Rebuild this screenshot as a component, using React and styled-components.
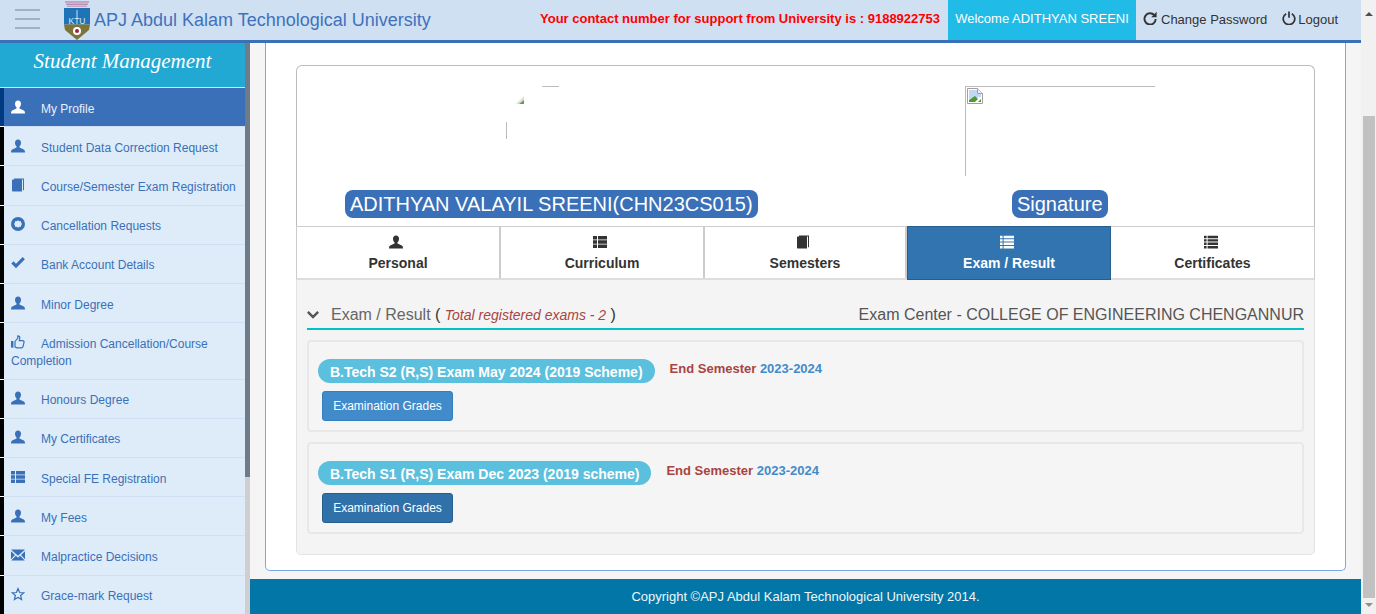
import React from 'react';
import styled, { createGlobalStyle } from 'styled-components';

const GlobalStyle = createGlobalStyle`
  html, body {
    margin: 0;
    height: 100%;
    overflow: hidden;
    background: #f5f5f5;
    font-family: "Liberation Sans", Arial, sans-serif;
    font-size: 14px;
    color: #333;
  }
  * { box-sizing: border-box; }
`;

const ICONS = {
  user: <path d="M7 .4C5 .4 4 1.9 4 3.7c0 1.5.7 3 1.5 3.6v1.3L1.2 10.400C.4 10.800 0 11.800 0 13.400h14c0-1.600-.4-2.600-1.200-3L8.500 8.600V7.300c.8-.6 1.500-2.100 1.500-3.600C10 1.900 9 .4 7 .4z" />,
  book: <path fillRule="evenodd" d="M3 .4h10v11.800h-1V1.400H3zM1 2.400c0-.6.4-1 1-1h9v12.200H2c-.6 0-1-.4-1-1z" />,
  ring: <path fillRule="evenodd" d="M7 0a7 7 0 1 0 0 14A7 7 0 0 0 7 0zm0 3.200l1.200 1 1.500-.1.300 1.500 1 1.400-1 1.400-.3 1.500-1.500-.1L7 10.800l-1.200-1-1.500.1-.3-1.500-1-1.400 1-1.400.3-1.500 1.500.1z" />,
  check: <path d="M.3 7.500l2.200-2.200 2.500 2.500L11.700 1l2.200 2.200L5 12.200z" />,
  thumb: (
    <g>
      <rect x="0" y="6" width="2.400" height="6.600" />
      <path fill="none" stroke="currentColor" strokeWidth="1.200" d="M4 6.500L6.800 3V.8c1.400 0 2 1 2 2.200L8.300 5.600h3.400c1 0 1.500.8 1.300 1.700l-1 4.300c-.2.800-.7 1.200-1.500 1.200H6c-.9 0-1.300-.5-2-.8z" />
    </g>
  ),
  thList: <path d="M0 1h4v3.400H0zM5 1h9v3.400H5zM0 5.300h4v3.400H0zM5 5.300h9v3.400H5zM0 9.600h4V13H0zM5 9.600h9V13H5z" />,
  list: <path d="M0 .8h2.600v2.400H0zM3.600.8H14v2.400H3.600zM0 4.200h2.600v2.400H0zM3.600 4.200H14v2.400H3.600zM0 7.600h2.600V10H0zM3.600 7.600H14V10H3.600zM0 11h2.600v2.400H0zM3.600 11H14v2.400H3.600z" />,
  mail: <path d="M0 1.500h14L7 7.800zM0 3.300l4 3.700-4 4.200zM14 3.300L10 7l4 4.200zM4.900 7.800L7 9.700l2.100-1.900 4.700 4.700H.2z" />,
  star: <path fill="none" stroke="currentColor" strokeWidth="1.200" d="M7 1.600l1.600 3.900 4.200.3-3.200 2.700 1 4.100L7 10.400l-3.600 2.200 1-4.100-3.200-2.700 4.200-.3z" />,
  chevron: <path d="M2 2.300L7 7.300l5-5 2 2-7 7-7-7z" />,
  repeat: (
    <g>
      <path fill="none" stroke="currentColor" strokeWidth="1.900" d="M11.300 4.200A5.600 5.600 0 1 0 12.700 8" />
      <path d="M13.600 .8v5.400H8.200z" />
    </g>
  ),
  power: (
    <g fill="none" stroke="currentColor" strokeWidth="1.700">
      <path d="M4.200 2.700a5.800 5.800 0 1 0 5.600 0" />
      <path d="M7 .5v6.300" />
    </g>
  ),
};

const Icon = ({ name, size = 14 }) => (
  <svg width={size} height={size} viewBox="0 0 14 14" fill="currentColor">{ICONS[name]}</svg>
);

const Page = styled.div`
  display: flex;
  width: 1376px;
  height: 614px;
  overflow: hidden;
`;

const Viewport = styled.div`
  display: flex;
  flex-direction: column;
  width: 1361px;
  height: 614px;
`;

const PageScrollbar = styled.div`
  display: flex;
  flex-direction: column;
  width: 15px;
  height: 614px;
  background: #f1f1f1;
`;

const ScrollArrow = styled.div`
  display: flex;
  justify-content: center;
  height: 16px;
  padding-top: ${({ $down }) => ($down ? '5px' : '6px')};
  &::before {
    content: '';
    border-left: 4px solid transparent;
    border-right: 4px solid transparent;
    ${({ $down }) => ($down ? 'border-top: 4px solid #8f8f8f;' : 'border-bottom: 4px solid #505050;')}
  }
`;

const ScrollGap = styled.div`
  height: 100px;
`;

const ScrollThumb = styled.div`
  flex: 1;
  margin: 0 1px 0 2px;
  background: #c1c1c1;
`;

const Header = styled.header`
  display: flex;
  align-items: stretch;
  height: 43px;
  flex: none;
  background: #cfe0f3;
  border-bottom: 3px solid #3a70b8;
`;

const Burger = styled.div`
  display: flex;
  flex-direction: column;
  gap: 7px;
  width: 25px;
  margin: 9px 0 0 15px;
  span {
    height: 2px;
    background: #9fb1c2;
  }
`;

const Logo = styled.svg`
  margin-left: 24px;
  flex: none;
  overflow: visible;
`;

const Title = styled.div`
  margin-left: 4px;
  font-size: 18px;
  line-height: 40px;
  color: #3f72bb;
  white-space: nowrap;
`;

const Support = styled.div`
  margin-left: auto;
  font-size: 13px;
  font-weight: bold;
  line-height: 38px;
  color: #f00;
  white-space: nowrap;
`;

const Welcome = styled.div`
  margin-left: 8px;
  width: 188px;
  text-align: center;
  font-size: 13px;
  line-height: 38px;
  color: #fff;
  background: #20bbe6;
  white-space: nowrap;
`;

const HeadLink = styled.a`
  display: flex;
  align-items: center;
  gap: ${({ $iconGap }) => $iconGap}px;
  margin-left: ${({ $gap }) => $gap}px;
  padding-bottom: 2px;
  font-size: 13px;
  color: #333;
  white-space: nowrap;
  svg { margin-top: -2px; }
`;

const HeaderEnd = styled.div`
  width: 23px;
  flex: none;
`;

const Body = styled.div`
  display: flex;
  flex: 1;
  min-height: 0;
`;

const Sidebar = styled.aside`
  display: flex;
  flex-direction: column;
  width: 245px;
  flex: none;
  overflow: hidden;
  background: #deecf9;
`;

const SideTitle = styled.div`
  height: 45px;
  flex: none;
  padding-top: 5px;
  text-align: center;
  font-family: "Liberation Serif", serif;
  font-style: italic;
  font-size: 21px;
  line-height: 26px;
  color: #fff;
  background: #21a9d4;
  border-bottom: 1px solid #cfe6f5;
`;

const SideItem = styled.a`
  position: relative;
  display: block;
  flex: none;
  padding: 12.500px 6px 8.500px 11px;
  font-size: 12px;
  line-height: 17.200px;
  color: ${({ $active }) => ($active ? '#e8f0fa' : '#3a70b8')};
  background: ${({ $active }) => ($active ? '#3a70b8' : '#deecf9')};
  box-shadow: inset 4px 0 0 ${({ $active }) => ($active ? '#003a80' : '#000')};
  border-bottom: 1px solid #cfe0f3;
  &::after {
    content: '';
    position: absolute;
    left: 0;
    bottom: -1px;
    width: 4px;
    height: 1px;
    background: #fff;
  }
`;

const SideIcon = styled.span`
  display: inline-block;
  width: 30px;
  height: 17px;
  vertical-align: top;
  color: ${({ $active }) => ($active ? '#fff' : '#3a70b8')};
  svg { display: block; margin-top: -1px; }
`;

const SideScrollbar = styled.div`
  display: flex;
  flex-direction: column;
  width: 5px;
  flex: none;
  background: #cfcfcf;
  &::before {
    content: '';
    height: 434px;
    background: #6f7b88;
  }
`;

const Content = styled.main`
  display: flex;
  flex-direction: column;
  flex: 1;
  min-width: 0;
  background: #f5f5f5;
`;

const Panel = styled.section`
  flex: 1;
  margin: 0 15px 8px;
  padding: 22px 30px 0;
  background: #fff;
  border: 1px solid #7aa8e0;
  border-top: none;
  border-radius: 0 0 5px 5px;
`;

const Card = styled.div`
  display: flex;
  flex-direction: column;
  height: 490px;
`;

const Identity = styled.div`
  display: flex;
  height: 161px;
  flex: none;
  border: 1px solid #bbb;
  border-bottom: none;
  border-radius: 6px 6px 0 0;
`;

const IdentityCol = styled.div`
  display: flex;
  flex: 1;
  flex-direction: column;
  align-items: center;
  padding-top: 20px;
`;

const ImageSlot = styled.div`
  width: ${({ $w }) => $w}px;
  height: 90px;
  margin-bottom: 14px;
`;

const SignatureImage = styled(ImageSlot)`
  padding: 1px;
  border-top: 1px solid #bbb;
  border-left: 1px solid #bbb;
`;

const NamePill = styled.div`
  height: 28px;
  padding: 0 5px;
  font-size: 20px;
  line-height: 28px;
  color: #fff;
  background: #3a70b8;
  border-radius: 8px;
  white-space: nowrap;
`;

const Tabs = styled.nav`
  display: grid;
  grid-template-columns: 204px 204px 202px 204px 1fr;
  height: 54px;
  flex: none;
  background: #fff;
  border: 1px solid #ccc;
  border-bottom: 2px solid #ddd;
`;

const Tab = styled.a`
  display: flex;
  flex-direction: column;
  align-items: center;
  padding-top: 8px;
  font-size: 14px;
  font-weight: bold;
  line-height: 20px;
  color: ${({ $active }) => ($active ? '#fff' : '#333')};
  background: ${({ $active }) => ($active ? '#3274b0' : 'transparent')};
  border-right: ${({ $plain }) => ($plain ? 'none' : '2px solid #ccc')};
  ${({ $active }) => $active && 'margin: -1px 0 -2px; border: 1px solid #285e8e;'}
  svg { margin: 0 4px 4px 0; flex: none; }
`;

const Section = styled.div`
  flex: 1;
  padding: 0 10px;
  background: #f4f4f4;
  border: 1px solid #e3e3e3;
  border-top: none;
  border-radius: 0 0 5px 5px;
`;

const SectionHead = styled.div`
  display: flex;
  justify-content: space-between;
  align-items: center;
  height: 50px;
  padding-top: 21px;
  font-size: 16px;
  line-height: 30px;
  color: #666;
  border-bottom: 2px solid #00c0c8;
  white-space: nowrap;
`;

const HeadTitle = styled.div`
  display: flex;
  align-items: center;
  gap: 12px;
  svg { color: #555; }
  em {
    font-size: 14px;
    color: #a94442;
  }
  b {
    font-weight: normal;
    color: #333;
  }
`;

const CenterName = styled.div`
  color: #555;
`;

const ExamCard = styled.div`
  height: 92px;
  margin-top: 10px;
  padding: 17px 9px 0;
  background: #f5f5f5;
  border: 2px solid #e8e8e8;
  border-radius: 4px;
`;

const ExamRow = styled.div`
  display: flex;
  align-items: flex-start;
  gap: 15px;
`;

const ExamPill = styled.div`
  height: 24px;
  padding: 0 12px;
  font-size: 14px;
  font-weight: bold;
  line-height: 26px;
  color: #fff;
  background: #5bc0de;
  border-radius: 12px;
  white-space: nowrap;
`;

const Term = styled.div`
  margin-top: 1px;
  font-size: 13px;
  font-weight: bold;
  line-height: 18px;
  color: #a94442;
  span { color: #428bca; }
`;

const GradeButton = styled.button`
  display: block;
  width: 131px;
  height: 30px;
  margin: 8px 0 0 4px;
  padding: 0;
  font-family: inherit;
  font-size: 12px;
  color: #fff;
  background: ${({ $pressed }) => ($pressed ? '#3071a9' : '#428bca')};
  border: 1px solid ${({ $pressed }) => ($pressed ? '#285e8e' : '#357ebd')};
  border-radius: 3px;
`;

const Footer = styled.footer`
  height: 35px;
  flex: none;
  text-align: center;
  font-size: 13px;
  line-height: 35px;
  color: #f0f6fa;
  background: #0276a6;
`;

const MENU = [
  ['user', 'My Profile'],
  ['user', 'Student Data Correction Request'],
  ['book', 'Course/Semester Exam Registration'],
  ['ring', 'Cancellation Requests'],
  ['check', 'Bank Account Details'],
  ['user', 'Minor Degree'],
  ['thumb', 'Admission Cancellation/Course Completion'],
  ['user', 'Honours Degree'],
  ['user', 'My Certificates'],
  ['thList', 'Special FE Registration'],
  ['user', 'My Fees'],
  ['mail', 'Malpractice Decisions'],
  ['star', 'Grace-mark Request'],
];

const TABS = [
  ['user', 'Personal'],
  ['thList', 'Curriculum'],
  ['book', 'Semesters'],
  ['list', 'Exam / Result'],
  ['list', 'Certificates'],
];

const EXAMS = [
  { name: 'B.Tech S2 (R,S) Exam May 2024 (2019 Scheme)' },
  { name: 'B.Tech S1 (R,S) Exam Dec 2023 (2019 scheme)', pressed: true },
];

const BrokenImage = () => (
  <svg width="16" height="16" viewBox="0 0 16 16">
    <path d="M.5.5h10l5 5v10H.5z" fill="#fff" stroke="#a0a0a0" />
    <path d="M10.500.5v5h5" fill="#eee" stroke="#a0a0a0" />
    <path d="M2 2h8v4h4v3L2 11z" fill="#c5d6f5" />
    <path d="M2 14v-2l6-4 3 3-3 3z" fill="#4f9a2f" />
    <path d="M11 14l3-3v3z" fill="#4f9a2f" />
  </svg>
);

const PhotoStub = () => (
  <svg width="90" height="90" viewBox="0 0 90 90">
    <path d="M36 .5h17M.5 36v17" stroke="#bbb" fill="none" />
    <path d="M18 10v8h-8z" fill="#d8e6d0" />
    <path d="M18 14v4h-5z" fill="#6a9a50" />
  </svg>
);

const KtuLogo = () => (
  <Logo width="26" height="40" viewBox="0 0 26 40">
    <rect x="1" y="1" width="24" height="2" fill="#c9a3c4" />
    <rect x="2" y="3.500" width="22" height="1.500" fill="#b98fb5" />
    <rect x="3" y="5.500" width="20" height="1.500" fill="#c9a3c4" />
    <rect y="8" width="26" height="16.500" fill="#1f74b8" />
    <rect x="12.500" y="10" width="1" height="9" fill="#cfe0f3" />
    <text x="13" y="23.500" fontSize="8.500" textAnchor="middle" fill="#dce9f5" fontFamily="Liberation Sans">KTU</text>
    <path d="M0 24.500h26L25 30 13 40 1 30z" fill="#7d7436" />
    <circle cx="13" cy="31" r="4" fill="#fff" />
    <circle cx="13" cy="31" r="2" fill="#9b2048" />
  </Logo>
);

const App = () => (
  <Page>
    <GlobalStyle />
    <Viewport>
      <Header>
        <Burger><span /><span /><span /></Burger>
        <KtuLogo />
        <Title>APJ Abdul Kalam Technological University</Title>
        <Support>Your contact number for support from University is : 9188922753</Support>
        <Welcome>Welcome ADITHYAN SREENI</Welcome>
        <HeadLink $gap={7} $iconGap={4}><Icon name="repeat" />Change Password</HeadLink>
        <HeadLink $gap={15} $iconGap={2}><Icon name="power" />Logout</HeadLink>
        <HeaderEnd />
      </Header>
      <Body>
        <Sidebar>
          <SideTitle>Student Management</SideTitle>
          {MENU.map(([icon, label], i) => (
            <SideItem key={label} $active={i === 0}>
              <SideIcon $active={i === 0}><Icon name={icon} /></SideIcon>
              {label}
            </SideItem>
          ))}
        </Sidebar>
        <SideScrollbar />
        <Content>
          <Panel>
            <Card>
              <Identity>
                <IdentityCol>
                  <ImageSlot $w={90}><PhotoStub /></ImageSlot>
                  <NamePill>ADITHYAN VALAYIL SREENI(CHN23CS015)</NamePill>
                </IdentityCol>
                <IdentityCol>
                  <SignatureImage $w={190}><BrokenImage /></SignatureImage>
                  <NamePill>Signature</NamePill>
                </IdentityCol>
              </Identity>
              <Tabs>
                {TABS.map(([icon, label], i) => (
                  <Tab key={label} $active={i === 3} $plain={i === 4}>
                    <Icon name={icon} />
                    {label}
                  </Tab>
                ))}
              </Tabs>
              <Section>
                <SectionHead>
                  <HeadTitle>
                    <Icon name="chevron" size={12} />
                    <span>Exam / Result <b>(</b> <em>Total registered exams - 2</em> <b>)</b></span>
                  </HeadTitle>
                  <CenterName>Exam Center - COLLEGE OF ENGINEERING CHENGANNUR</CenterName>
                </SectionHead>
                {EXAMS.map((exam) => (
                  <ExamCard key={exam.name}>
                    <ExamRow>
                      <ExamPill>{exam.name}</ExamPill>
                      <Term>End Semester <span>2023-2024</span></Term>
                    </ExamRow>
                    <GradeButton $pressed={exam.pressed}>Examination Grades</GradeButton>
                  </ExamCard>
                ))}
              </Section>
            </Card>
          </Panel>
          <Footer>Copyright ©APJ Abdul Kalam Technological University 2014.</Footer>
        </Content>
      </Body>
    </Viewport>
    <PageScrollbar>
      <ScrollArrow />
      <ScrollGap />
      <ScrollThumb />
      <ScrollArrow $down />
    </PageScrollbar>
  </Page>
);

export default App;
